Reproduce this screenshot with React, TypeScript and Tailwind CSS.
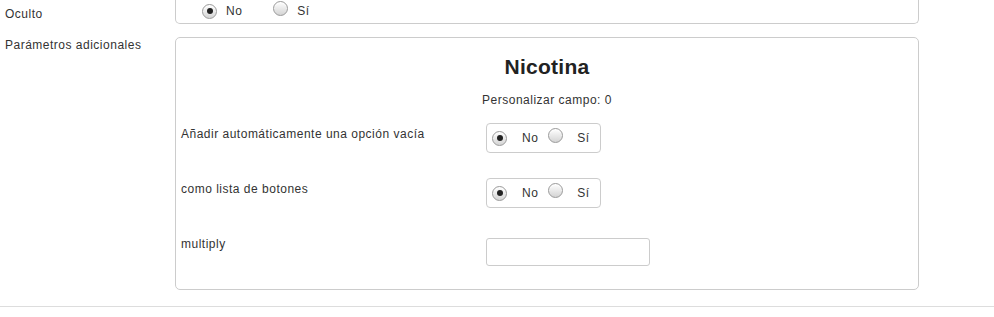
import React from "react";

function Radio({ checked }: { checked?: boolean }) {
  return (
    <span className="relative inline-flex h-[15px] w-[15px] shrink-0 items-center justify-center rounded-full border border-[#9a9a9a] bg-gradient-to-b from-[#ffffff] to-[#d4d4d4] shadow-[inset_0_1px_1px_rgba(255,255,255,0.8)]">
      {checked && <span className="block h-[6px] w-[6px] rounded-full bg-[#222]" />}
    </span>
  );
}

function RadioBox() {
  return (
    <div className="flex h-[30px] w-[115px] items-center rounded-[4px] border border-[#ccc] pl-[5px]">
      <Radio checked />
      <span className="ml-[15px]">No</span>
      <span className="ml-[10px]">
        <Radio />
      </span>
      <span className="ml-[14px]">Sí</span>
    </div>
  );
}

export default function App() {
  return (
    <div
      className="relative h-[317px] w-[994px] overflow-hidden bg-white text-[12px] leading-[18px] tracking-[0.5px] text-[#333]"
      style={{ fontFamily: '"Liberation Sans", Arial, sans-serif' }}
    >
      {/* Oculto row */}
      <div className="flex">
        <div className="w-[175px] pl-[5px] pt-[5px]">Oculto</div>
        <div className="flex h-[24px] w-[744px] items-start rounded-b-[5px] border border-t-0 border-[#ccc] pl-[26px] pt-[1px]">
          <div className="flex items-center">
            <Radio checked />
            <span className="ml-[9px]">No</span>
            <span className="ml-[31px]">
              <Radio />
            </span>
            <span className="ml-[9px]">Sí</span>
          </div>
        </div>
      </div>

      {/* Parámetros adicionales */}
      <div className="mt-[13px] flex">
        <div className="w-[175px] pl-[5px] leading-[16px]">Parámetros adicionales</div>
        <div className="h-[253px] w-[744px] rounded-[5px] border border-[#ccc]">
          <div className="pt-[17px] text-center text-[21px] font-bold leading-[24px] tracking-[0.25px] text-[#222]">
            Nicotina
          </div>
          <div className="mt-[13px] text-center leading-[16px]">Personalizar campo: 0</div>

          <div className="mt-[15px] flex px-[5px]">
            <div className="w-[305px] pt-[2px]">Añadir automáticamente una opción vacía</div>
            <RadioBox />
          </div>

          <div className="mt-[25px] flex px-[5px]">
            <div className="w-[305px] pt-[2px]">como lista de botones</div>
            <RadioBox />
          </div>

          <div className="mt-[30px] flex px-[5px]">
            <div className="w-[305px] leading-[12px]">multiply</div>
            <input
              type="text"
              className="h-[28px] w-[164px] rounded-[3px] border border-[#ccc] bg-white outline-none"
            />
          </div>
        </div>
      </div>

      <div className="mt-[16px] h-px w-[994px] bg-[#ddd]" />
    </div>
  );
}
